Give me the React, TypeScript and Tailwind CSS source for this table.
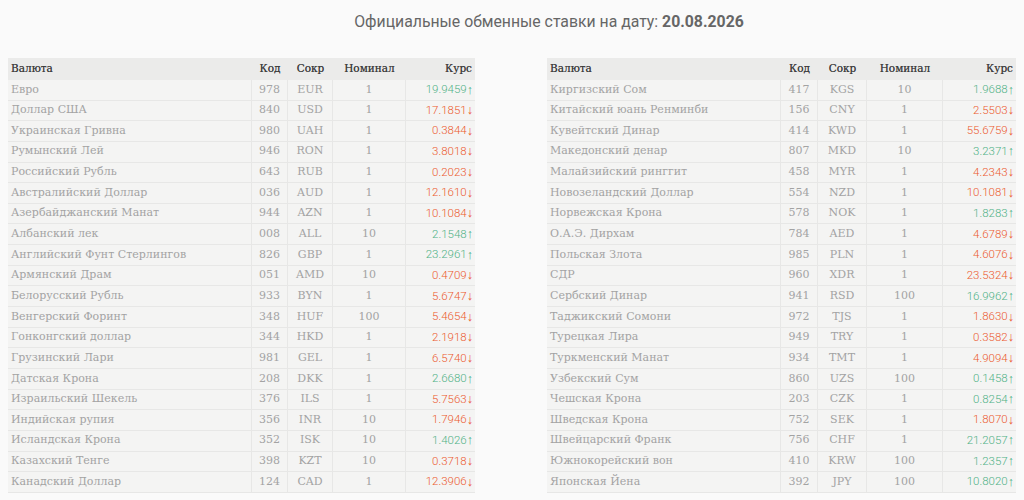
import React from "react";

type Row = [string, string, string, string, string, boolean];

const left: Row[] = [
  ["Евро", "978", "EUR", "1", "19.9459", true],
  ["Доллар США", "840", "USD", "1", "17.1851", false],
  ["Украинская Гривна", "980", "UAH", "1", "0.3844", false],
  ["Румынский Лей", "946", "RON", "1", "3.8018", false],
  ["Российский Рубль", "643", "RUB", "1", "0.2023", false],
  ["Австралийский Доллар", "036", "AUD", "1", "12.1610", false],
  ["Азербайджанский Манат", "944", "AZN", "1", "10.1084", false],
  ["Албанский лек", "008", "ALL", "10", "2.1548", true],
  ["Английский Фунт Стерлингов", "826", "GBP", "1", "23.2961", true],
  ["Армянский Драм", "051", "AMD", "10", "0.4709", false],
  ["Белорусский Рубль", "933", "BYN", "1", "5.6747", false],
  ["Венгерский Форинт", "348", "HUF", "100", "5.4654", false],
  ["Гонконгский доллар", "344", "HKD", "1", "2.1918", false],
  ["Грузинский Лари", "981", "GEL", "1", "6.5740", false],
  ["Датская Крона", "208", "DKK", "1", "2.6680", true],
  ["Израильский Шекель", "376", "ILS", "1", "5.7563", false],
  ["Индийская рупия", "356", "INR", "10", "1.7946", false],
  ["Исландская Крона", "352", "ISK", "10", "1.4026", true],
  ["Казахский Тенге", "398", "KZT", "10", "0.3718", false],
  ["Канадский Доллар", "124", "CAD", "1", "12.3906", false],
];

const right: Row[] = [
  ["Киргизский Сом", "417", "KGS", "10", "1.9688", true],
  ["Китайский юань Ренминби", "156", "CNY", "1", "2.5503", false],
  ["Кувейтский Динар", "414", "KWD", "1", "55.6759", false],
  ["Македонский денар", "807", "MKD", "10", "3.2371", true],
  ["Малайзийский ринггит", "458", "MYR", "1", "4.2343", false],
  ["Новозеландский Доллар", "554", "NZD", "1", "10.1081", false],
  ["Норвежская Крона", "578", "NOK", "1", "1.8283", true],
  ["О.А.Э. Дирхам", "784", "AED", "1", "4.6789", false],
  ["Польская Злота", "985", "PLN", "1", "4.6076", false],
  ["СДР", "960", "XDR", "1", "23.5324", false],
  ["Сербский Динар", "941", "RSD", "100", "16.9962", true],
  ["Таджикский Сомони", "972", "TJS", "1", "1.8630", false],
  ["Турецкая Лира", "949", "TRY", "1", "0.3582", false],
  ["Туркменский Манат", "934", "TMT", "1", "4.9094", false],
  ["Узбекский Сум", "860", "UZS", "100", "0.1458", true],
  ["Чешская Крона", "203", "CZK", "1", "0.8254", true],
  ["Шведская Крона", "752", "SEK", "1", "1.8070", false],
  ["Швейцарский Франк", "756", "CHF", "1", "21.2057", true],
  ["Южнокорейский вон", "410", "KRW", "100", "1.2357", true],
  ["Японская Йена", "392", "JPY", "100", "10.8020", true],
];

function Table({ rows, widths }: { rows: Row[]; widths: string[] }) {
  return (
    <div className="flex flex-col bg-[#f4f4f3]">
      <div className="flex h-[22px] items-center bg-[#ebebea] text-[10.5px] text-[#3c3c3c] [text-shadow:0_0_0.4px_#666]">
        <div className={`${widths[0]} pl-[3px]`}>Валюта</div>
        <div className={`${widths[1]} text-center`}>Код</div>
        <div className={`${widths[2]} text-center`}>Сокр</div>
        <div className={`${widths[3]} text-center`}>Номинал</div>
        <div className={`${widths[4]} pr-[3px] text-right`}>Курс</div>
      </div>
      {rows.map((r, i) => (
        <div
          key={i}
          className="flex h-[20.65px] items-stretch border-b border-[#e7e7e6] text-[11px] text-[#a3a3a3]"
        >
          <div className={`${widths[0]} flex items-center whitespace-nowrap border-r border-[#e7e7e6] pl-[3px]`}>{r[0]}</div>
          <div className={`${widths[1]} flex items-center justify-center border-r border-[#e7e7e6]`}>{r[1]}</div>
          <div className={`${widths[2]} flex items-center justify-center border-r border-[#e7e7e6]`}>{r[2]}</div>
          <div className={`${widths[3]} flex items-center justify-center border-r border-[#e7e7e6]`}>{r[3]}</div>
          <div
            className={`${widths[4]} flex items-center justify-end pr-[2px] font-['Roboto',sans-serif] text-[11.5px] font-light ${
              r[5] ? "text-[#4fb286]" : "text-[#ec5a2e]"
            }`}
          >
            {r[4]}
            <span className="font-['Roboto',sans-serif] text-[12.5px] leading-none">{r[5] ? "↑" : "↓"}</span>
          </div>
        </div>
      ))}
    </div>
  );
}

export default function App() {
  return (
    <div
      className="h-[500px] w-[1024px] overflow-hidden bg-[#fafafa]"
      style={{ fontFamily: "'DejaVu Serif', serif" }}
    >
      <div className="flex h-[58px] items-start justify-center pt-[10px] pl-[74px] font-['Roboto',sans-serif] text-[15.8px] text-[#666]">
        Официальные обменные ставки на дату:&nbsp;<span className="font-bold">20.08.2026</span>
      </div>
      <div className="flex gap-[72px] pl-[8px]">
        <Table rows={left} widths={["w-[244px]", "w-[36px]", "w-[45px]", "w-[73px]", "w-[69px]"]} />
        <Table rows={right} widths={["w-[234px]", "w-[37px]", "w-[49px]", "w-[76px]", "w-[73px]"]} />
      </div>
    </div>
  );
}
